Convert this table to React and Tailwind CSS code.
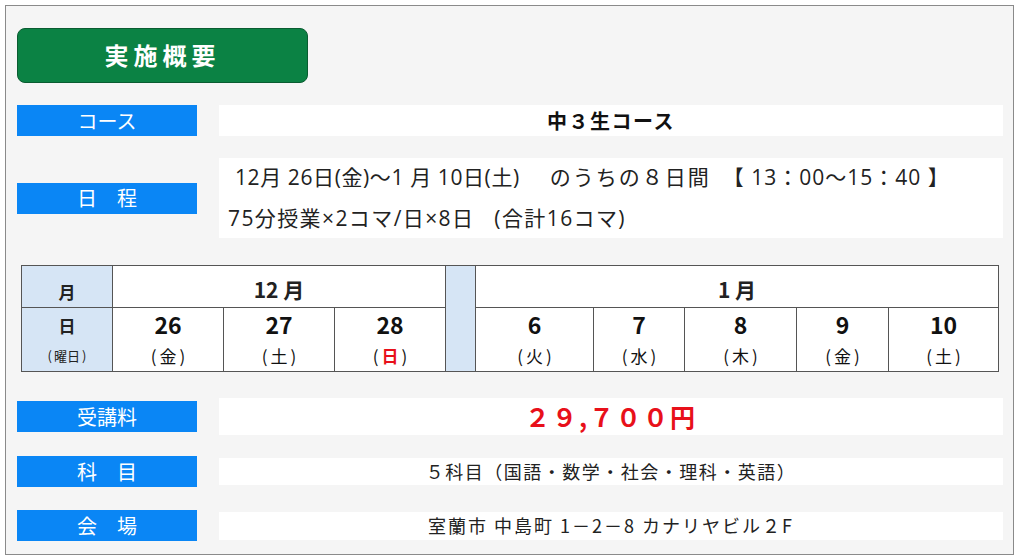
const jp = { fontFamily: '"Noto Sans CJK JP", "Noto Sans", sans-serif' };
const mixed = { fontFamily: '"Open Sans", "Noto Sans CJK JP", sans-serif' };

const Label = ({ children }) => (
    <div className="w-[180px] h-[31px] shrink-0 bg-[#0a86f5] text-white text-[20px] flex items-center justify-center leading-none">
        {children}
    </div>
);

const days12 = [
    { d: "26", w: "金" },
    { d: "27", w: "土" },
    { d: "28", w: "日", red: true },
];
const days1 = [
    { d: "6", w: "火" },
    { d: "7", w: "水" },
    { d: "8", w: "木" },
    { d: "9", w: "金" },
    { d: "10", w: "土" },
];

const DayCell = ({ day }) => (
    <td className="border border-[#555] text-center align-top bg-white">
        <div className="text-[23px] font-bold leading-none pt-[5px] text-[#111]">{day.d}</div>
        <div className="text-[17px] leading-none pt-[11px] text-[#111]">
            (<span className={day.red ? "mx-[3px] text-[#e8101a] font-bold" : "mx-[3px]"}>{day.w}</span>)
        </div>
    </td>
);

export default function App() {
    return (
        <div className="w-[1024px] h-[559px] bg-white p-[5px]" style={jp}>
            <div className="h-[550px] w-[1009px] border border-[#8a8a8a] bg-[#f5f5f5] pl-[11px] pr-[10px] pt-[22px] flex flex-col text-[#222]">
                {/* タイトル */}
                <div className="w-[291px] h-[55px] rounded-[8px] bg-[#0b8244] border border-[#0a5c31] flex items-center justify-center text-white text-[24px] font-bold tracking-[5px] pb-[2px]">
                    実施概要
                </div>

                {/* コース */}
                <div className="flex items-center gap-[22px] mt-[22px]">
                    <Label>コース</Label>
                    <div className="flex-1 h-[31px] bg-white flex items-center justify-center text-[20px] font-bold text-[#111] tracking-[1.5px]">
                        中３生コース
                    </div>
                </div>

                {/* 日程 */}
                <div className="flex items-center gap-[22px] mt-[22px]">
                    <Label>日　程</Label>
                    <div className="flex-1 h-[80px] bg-white flex flex-col justify-center pl-[9px] text-[21px] leading-none gap-[20px]" style={mixed}>
                        <div className="pl-[7px] whitespace-nowrap">
                            <span className="tracking-[0.6px]">12月 26日(金)〜1 月 10日(土)</span>
                            <span className="ml-[30px] tracking-[2px]">のうちの８日間</span>
                            <span className="ml-[12px] tracking-[1px]">【 13：00〜15：40 】</span>
                        </div>
                        <div className="tracking-[1.4px] whitespace-nowrap">
                            75分授業×2コマ/日×8日<span className="ml-[20px]">(合計16コマ)</span>
                        </div>
                    </div>
                </div>

                {/* 日程表 */}
                <table className="mt-[27px] ml-[4px] w-[978px] border-collapse border-[1.5px] border-[#444] table-fixed">
                    <colgroup>
                        <col className="w-[91px]" />
                        <col className="w-[111px]" />
                        <col className="w-[111px]" />
                        <col className="w-[111px]" />
                        <col className="w-[30px]" />
                        <col className="w-[118px]" />
                        <col className="w-[91px]" />
                        <col className="w-[112px]" />
                        <col className="w-[92px]" />
                        <col className="w-[110px]" />
                    </colgroup>
                    <tbody>
                        <tr className="h-[42px]">
                            <td className="border border-[#555] bg-[#d6e5f5] text-center align-bottom pb-[3px] text-[17px] font-bold">月</td>
                            <td colSpan={3} className="border border-[#555] bg-white text-center align-bottom pb-[7px] text-[21px] font-bold leading-none">12 月</td>
                            <td rowSpan={2} className="border border-[#555] bg-[#d6e5f5]"></td>
                            <td colSpan={5} className="border border-[#555] bg-white text-center align-bottom pb-[7px] text-[21px] font-bold leading-none">1 月</td>
                        </tr>
                        <tr className="h-[64px]">
                            <td className="border border-[#555] bg-[#d6e5f5] text-center align-top">
                                <div className="text-[17px] font-bold leading-none pt-[9px]">日</div>
                                <div className="text-[13px] leading-none pt-[15px]">
                                    (<span className="mx-[2px]">曜日</span>)
                                </div>
                            </td>
                            {days12.map((day) => (
                                <DayCell key={day.d} day={day} />
                            ))}
                            {days1.map((day) => (
                                <DayCell key={day.d} day={day} />
                            ))}
                        </tr>
                    </tbody>
                </table>

                {/* 受講料 */}
                <div className="flex items-center gap-[22px] mt-[26px]">
                    <Label>受講料</Label>
                    <div className="flex-1 h-[37px] bg-white flex items-center justify-center text-[25px] font-bold text-[#e8101a] tracking-[2px]">
                        ２９,７００円
                    </div>
                </div>

                {/* 科目 */}
                <div className="flex items-center gap-[22px] mt-[21px]">
                    <Label>科　目</Label>
                    <div className="flex-1 h-[27px] bg-white flex items-center justify-center text-[18px] tracking-[1.5px]">
                        ５科目（国語・数学・社会・理科・英語）
                    </div>
                </div>

                {/* 会場 */}
                <div className="flex items-center gap-[22px] mt-[23px]">
                    <Label>会　場</Label>
                    <div className="flex-1 h-[28px] bg-white flex items-center justify-center text-[18px] tracking-[2px]">
                        室蘭市 中島町 1－2－8 カナリヤビル２F
                    </div>
                </div>
            </div>
        </div>
    );
}
